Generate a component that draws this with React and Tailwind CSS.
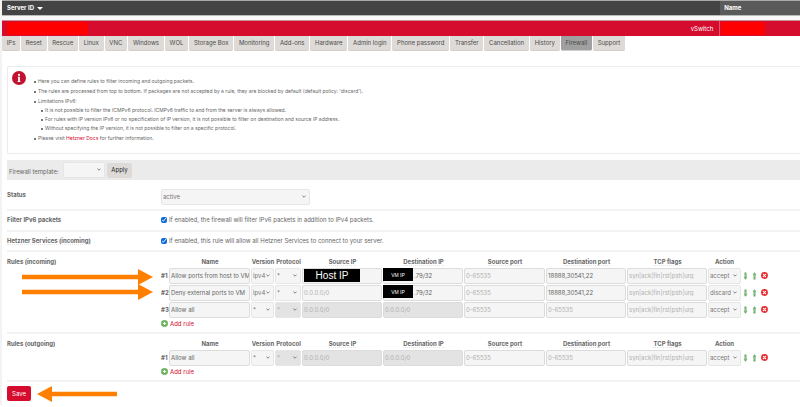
import React from 'react';

const tabs = [
  'IPs', 'Reset', 'Rescue', 'Linux', 'VNC', 'Windows', 'WOL', 'Storage Box', 'Monitoring',
  'Add-ons', 'Hardware', 'Admin login', 'Phone password', 'Transfer', 'Cancellation',
  'History', 'Firewall', 'Support',
];

const incoming = [
  { name: 'Allow ports from host to VM', version: 'ipv4', source: 'host', dest: '.79/32', destPort: '18888,30541,22', action: 'accept' },
  { name: 'Deny external ports to VM', version: 'ipv4', dest: '.79/32', destPort: '18888,30541,22', action: 'discard' },
  { name: 'Allow all', version: '*', locked: true, action: 'accept' },
];

const outgoing = [{ name: 'Allow all', version: '*', locked: true, action: 'accept' }];

const columns = [
  ['Name', false], ['Version', false], ['Protocol', false], ['Source IP', true],
  ['Destination IP', true], ['Source port', true], ['Destination port', true],
  ['TCP flags', true], ['Action', false],
];

const bullet = 'before:mr-0.5 before:inline-block before:h-0.5 before:w-0.5 before:bg-[#777] before:align-middle';

function Select({ label, value, options, disabled, id, className = '' }) {
  const tone = disabled ? 'bg-[#e3e3e3] text-[#aaa]' : 'bg-[#f5f5f5] text-[#777]';
  return (
    <div className={`relative h-4 ${className}`}>
      <select
        id={id}
        aria-label={label}
        defaultValue={value}
        disabled={disabled}
        className={`block h-full w-full appearance-none rounded-xs border border-[#e6e6e6] pl-px opacity-100 ${tone}`}
      >
        {options.map((o) => <option key={o}>{o}</option>)}
      </select>
      <svg viewBox="0 0 6 4" className="pointer-events-none absolute top-1.5 right-1 h-[3px] w-1" fill="none" stroke="#777" strokeWidth="1.4">
        <path d="M.6.7 3 3.1 5.4.7" />
      </svg>
    </div>
  );
}

function Field({ label, value, placeholder, disabled, className = '' }) {
  const tone = disabled ? 'bg-[#e3e3e3]' : 'bg-[#f5f5f5]';
  return (
    <input
      type="text"
      aria-label={label}
      defaultValue={value}
      placeholder={placeholder}
      disabled={disabled}
      className={`block h-4 w-full rounded-xs border border-[#dcdcdc] px-px text-[#666] placeholder:text-[#b0b0b0] ${tone} ${className}`}
    />
  );
}

function ArrowIcon({ up }) {
  return (
    <svg viewBox="0 0 5 8" className="h-2 w-[5px]">
      {up
        ? <path d="M2.5.3 4.4 2.8H3.5V7.5h-2V2.8H.6z" fill="#62a961" />
        : <path d="M2.5 7.7.6 5.2h.9V.5h2v4.7h.9z" fill="#62a961" />}
      <path d="M2.2 1.6v4.6" stroke="#b5dcae" strokeWidth=".6" />
    </svg>
  );
}

function RemoveIcon() {
  return (
    <svg viewBox="0 0 8 8" className="h-[7px] w-[7px]">
      <circle cx="4" cy="4" r="3.9" fill="#ea2a2c" />
      <path d="M2.7 2.7 5.3 5.3M5.3 2.7 2.7 5.3" stroke="#fff" strokeWidth="1.4" strokeLinecap="round" />
    </svg>
  );
}

function Mask({ children, className }) {
  return (
    <span className={`absolute flex h-[13px] items-center justify-center bg-black font-['Liberation_Sans',sans-serif] text-white ${className}`}>
      {children}
    </span>
  );
}

function RuleRow({ rule, index }) {
  const n = `Rule ${index + 1}`;
  return (
    <tr className="h-[17px]">
      <th scope="row" className="p-0 text-left font-bold">#{index + 1}</th>
      <td className="p-0 pr-px"><Field label={`${n} name`} value={rule.name} className="pr-0" /></td>
      <td className="p-0 pr-px"><Select label={`${n} version`} value={rule.version} options={['*', 'ipv4', 'ipv6']} /></td>
      <td className="p-0 pr-px"><Select label={`${n} protocol`} value="*" options={['*', 'tcp', 'udp']} disabled={rule.locked} /></td>
      <td className="relative p-0 pr-px">
        <Field label={`${n} source IP`} placeholder={rule.source ? '' : '0.0.0.0/0'} disabled={rule.locked} />
        {rule.source && <Mask className="top-0.5 left-0.5 w-14 text-[10px]">Host IP</Mask>}
      </td>
      <td className="relative p-0 pr-px">
        <Field label={`${n} destination IP`} value={rule.dest} placeholder="0.0.0.0/0" disabled={rule.locked} className={rule.dest ? 'pl-[30px]' : ''} />
        {rule.dest && <Mask className="top-px left-0 w-[30px] text-[5px]">VM IP</Mask>}
      </td>
      <td className="p-0 pr-px"><Field label={`${n} source port`} placeholder="0-65535" /></td>
      <td className="p-0 pr-px"><Field label={`${n} destination port`} value={rule.destPort} placeholder="0-65535" /></td>
      <td className="p-0 pr-px"><Field label={`${n} TCP flags`} placeholder="syn|ack|fin|rst|psh|urg" /></td>
      <td className="p-0"><Select label={`${n} action`} value={rule.action} options={['accept', 'discard']} /></td>
      <td className="p-0 pl-0.5">
        <div className="flex items-center gap-1">
          <button type="button" aria-label="Move down"><ArrowIcon /></button>
          <button type="button" aria-label="Move up"><ArrowIcon up /></button>
          <button type="button" aria-label="Delete rule"><RemoveIcon /></button>
        </div>
      </td>
    </tr>
  );
}

function RulesTable({ rules }) {
  return (
    <div>
      <table className="w-[612px] table-fixed border-separate border-spacing-0">
        <colgroup>
          <col className="w-2" />
          <col className="w-[82px]" />
          <col className="w-6" />
          <col className="w-[27px]" />
          <col className="w-[81px]" />
          <col className="w-[81px]" />
          <col className="w-[82px]" />
          <col className="w-[81px]" />
          <col className="w-[81px]" />
          <col className="w-[33px]" />
          <col />
        </colgroup>
        <thead>
          <tr className="h-[9px]">
            <td className="p-0" />
            {columns.map(([title, hint]) => (
              <th key={title} scope="col" className="p-0 text-center align-top font-bold whitespace-nowrap">
                <span className={hint ? 'border-b border-dotted border-[#e4e4e4]' : ''}>{title}</span>
              </th>
            ))}
            <td className="p-0" />
          </tr>
        </thead>
        <tbody>
          {rules.map((rule, i) => <RuleRow key={i} rule={rule} index={i} />)}
        </tbody>
      </table>
      <button type="button" className="mt-px flex h-[9px] items-center gap-0.5 text-[#d50c2d]">
        <svg viewBox="0 0 8 8" className="h-[7px] w-[7px]">
          <circle cx="4" cy="4" r="3.7" fill="#6fb85c" stroke="#4f9a48" strokeWidth=".5" />
          <path d="M4 2.2v3.6M2.2 4h3.6" stroke="#fff" strokeWidth="1.3" />
        </svg>
        Add rule
      </button>
    </div>
  );
}

function Row({ title, htmlFor, hint, className, labelClass = '', children }) {
  const text = <span className={hint ? 'border-b border-dotted border-[#e4e4e4]' : ''}>{title}</span>;
  return (
    <div className={`flex border-b-2 border-[#f3f3f3] ${className}`}>
      <div className={`w-[154px] shrink-0 font-bold ${labelClass}`}>
        {htmlFor ? <label htmlFor={htmlFor}>{text}</label> : text}
      </div>
      {children}
    </div>
  );
}

function Pointer({ className, left }) {
  return (
    <svg viewBox={left ? '0 0 80 16' : '0 0 131 16'} className={`absolute h-4 ${className}`} fill="#ff8000">
      {left
        ? <path d="M0 8 15 0v5.7h65v4.6H15V16z" />
        : <path d="M131 8 116 0v5.7H0v4.6h116V16z" />}
    </svg>
  );
}

export default function App() {
  return (
    <div className="overflow-x-hidden border-l-2 border-[#f3f3f3] bg-white font-['Inter','Liberation_Sans',sans-serif] text-[6px] leading-[8px] text-[#666]">
      <header className="border-b border-[#bbb] bg-[#f7f7f7] text-white">
        <div className="flex h-[15px] border-t border-[#aaa] bg-[#444] font-bold">
          <button type="button" className="flex w-9/10 items-center gap-[3px] pl-[5px]">
            Server ID
            <svg viewBox="0 0 6 3" className="h-[3px] w-1.5" fill="#fff"><path d="M0 0h6L3 3z" /></svg>
          </button>
          <div className="flex flex-1 items-center bg-[#5a5a5a] pl-1">Name</div>
        </div>
      </header>
      <div className="h-1 bg-[#f8f8f8]" />
      <div className="flex h-4 border-t border-[#c98f97] bg-[#d50c2d] text-white">
        <div className="flex w-9/10 items-center justify-between border-r border-[#e4566c] pr-1.5 pl-[5px]">
          <div className="h-[13px] w-[81px] bg-[#ff0000]" />
          <a href="#vswitch">vSwitch</a>
        </div>
        <div className="flex flex-1 items-center pl-px">
          <div className="h-[13px] w-11 bg-[#ff0000]" />
        </div>
      </div>
      <nav className="flex w-[623px] gap-px">
        {tabs.map((tab) => (
          <a
            key={tab}
            href={`#${tab}`}
            className={`flex h-[15px] grow items-center justify-center rounded-b-xs border-b border-[#d0cdca] px-1 whitespace-nowrap text-[#4c4c4c] ${tab === 'Firewall' ? 'bg-[#a0a0a0]' : 'bg-[#dedad7]'}`}
          >
            {tab}
          </a>
        ))}
      </nav>

      <main className="relative pt-[15px] pl-[5px]">
        <section className="flex h-[88px] rounded-l-xs border border-r-0 border-[#ececec] pl-1">
          <svg viewBox="0 0 14 14" className="mt-1 h-3.5 w-3.5 shrink-0">
            <circle cx="7" cy="7" r="7" fill="#c3122f" />
            <circle cx="7" cy="3.9" r="1.1" fill="#fff" />
            <path d="M5.8 5.8h2.1v4.3h.5v.8H5.6v-.8h.5V6.6h-.3z" fill="#fff" />
          </svg>
          <ul className="mt-2.5 ml-2 flex flex-col gap-px text-[5px] leading-[9px]">
            <li className={bullet}>Here you can define rules to filter incoming and outgoing packets.</li>
            <li className={bullet}>The rules are processed from top to bottom. If packages are not accepted by a rule, they are blocked by default (default policy: 'discard').</li>
            <li className={bullet}>
              Limitations IPv6:
              <ul className="pl-[7px]">
                <li className={bullet}>It is not possible to filter the ICMPv6 protocol. ICMPv6 traffic to and from the server is always allowed.</li>
                <li className={bullet}>For rules with IP version IPv6 or no specification of IP version, it is not possible to filter on destination and source IP address.</li>
                <li className={bullet}>Without specifying the IP version, it is not possible to filter on a specific protocol.</li>
              </ul>
            </li>
            <li className={bullet}>Please visit <a href="#docs" className="text-[#d50c2d]">Hetzner Docs</a> for further information.</li>
          </ul>
        </section>

        <section className="mt-1.5 flex h-5 items-center bg-[#ebebeb] pl-0.5">
          <label htmlFor="template" className="w-[54px] pt-1 whitespace-nowrap">Firewall template:</label>
          <Select id="template" value="" options={['']} className="w-[42px]" />
          <button type="button" className="ml-0.5 h-[15px] w-[25px] rounded-xs bg-[#dedad7] text-center text-[#222]">Apply</button>
        </section>

        <Row title="Status" htmlFor="status" className="h-[31px] pt-[9px]" labelClass="pt-0.5">
          <Select id="status" value="active" options={['active', 'disabled']} className="w-[149px]" />
        </Row>
        <Row title="Filter IPv6 packets" className="h-[21px] pt-[5px]">
          <label className="flex h-2 items-center gap-0.5">
            <input type="checkbox" defaultChecked className="h-1.5 w-1.5 accent-[#0b6adb]" />
            If enabled, the firewall will filter IPv6 packets in addition to IPv4 packets.
          </label>
        </Row>
        <Row title="Hetzner Services (incoming)" hint className="h-5 pt-[5px]">
          <label className="flex h-2 items-center gap-0.5">
            <input type="checkbox" defaultChecked className="h-1.5 w-1.5 accent-[#0b6adb]" />
            If enabled, this rule will allow all Hetzner Services to connect to your server.
          </label>
        </Row>
        <Row title="Rules (incoming)" className="pt-1.5 pb-1">
          <RulesTable rules={incoming} />
        </Row>
        <Row title="Rules (outgoing)" className="pt-1.5 pb-1">
          <RulesTable rules={outgoing} />
        </Row>
        <button type="button" className="mt-1 mb-1 block h-[15px] w-6 rounded-xs bg-[#d50c2d] text-center text-white">Save</button>

        <Pointer className="top-[218px] left-5 w-[131px]" />
        <Pointer className="top-[233px] left-5 w-[131px]" />
        <Pointer left className="top-[335px] left-[35px] w-20" />
      </main>
    </div>
  );
}
